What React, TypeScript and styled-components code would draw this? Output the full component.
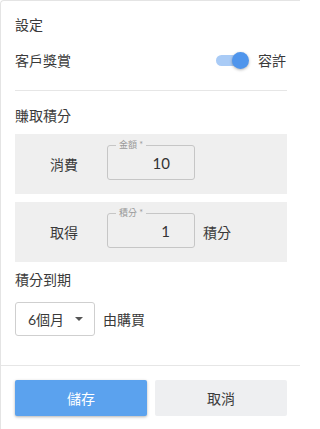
import React from "react";
import styled, { createGlobalStyle } from "styled-components";

const Global = createGlobalStyle`
  html, body { margin: 0; padding: 0; background: #fff; overflow: hidden; }
  body { font-family: Lato, "Noto Sans CJK TC", sans-serif; color: #3a3a3a; }
  * { box-sizing: border-box; }
`;

const Card = styled.div`
  width: 300px;
  min-height: 440px;
  border: 1px solid #e4e4e4;
  border-right: none;
  border-radius: 4px 0 0 4px;
  padding: 0 13px 0 14px;
  background: #fff;
`;

const Title = styled.div`
  padding-top: 14px;
  font-size: 14px;
  line-height: 20px;
`;

const Row = styled.div<{ $mt?: number }>`
  display: flex;
  align-items: center;
  margin-top: ${(p) => p.$mt ?? 0}px;
`;

const SettingRow = styled(Row)`
  height: 30px;
  justify-content: space-between;
  font-size: 14px;
  padding-right: 1px;
`;

const ToggleWrap = styled.div`
  display: flex;
  align-items: center;
  gap: 9px;
`;

const Track = styled.div`
  position: relative;
  width: 28px;
  height: 11px;
  border-radius: 6px;
  background: #a9cbf6;
  margin-right: 5px;
`;

const Thumb = styled.div`
  position: absolute;
  top: -3px;
  right: -5px;
  width: 17px;
  height: 17px;
  border-radius: 50%;
  background: #4f95ec;
  box-shadow: 0 1px 3px rgba(0, 0, 0, 0.3);
`;

const Divider = styled.div<{ $mt: number; $full?: boolean }>`
  height: 1px;
  background: #e6e6e6;
  margin-top: ${(p) => p.$mt}px;
  margin-left: ${(p) => (p.$full ? -14 : 0)}px;
  margin-right: ${(p) => (p.$full ? -13 : 0)}px;
`;

const Section = styled.div<{ $mt: number }>`
  margin-top: ${(p) => p.$mt}px;
  font-size: 14px;
  line-height: 20px;
`;

const GrayBox = styled.div<{ $mt: number }>`
  margin-top: ${(p) => p.$mt}px;
  height: 60px;
  background: #efefef;
  display: flex;
  align-items: center;
  padding-left: 35px;
  font-size: 14px;
`;

const BoxLabel = styled.span`
  width: 28px;
  margin-right: 29px;
  white-space: nowrap;
`;

const Outline = styled.div`
  position: relative;
  width: 88px;
  height: 35px;
  border: 1px solid #c6c6c6;
  border-radius: 3px;
  margin-bottom: 3px;
  display: flex;
  align-items: center;
  justify-content: flex-end;
  padding-right: 24px;
  font-size: 15px;
  color: #333;
`;

const Legend = styled.span`
  position: absolute;
  top: -7px;
  left: 8px;
  padding: 0 3px;
  background: #efefef;
  font-size: 9px;
  line-height: 12px;
  color: #9a9a9a;
`;

const Suffix = styled.span`
  margin-left: 8px;
`;

const Select = styled.div`
  width: 80px;
  height: 34px;
  border: 1px solid #cfcfcf;
  border-radius: 3px;
  display: flex;
  align-items: center;
  padding-left: 12px;
  font-size: 14px;
  gap: 11px;
`;

const Caret = styled.span`
  width: 0;
  height: 0;
  border-left: 4px solid transparent;
  border-right: 4px solid transparent;
  border-top: 4px solid #555;
`;

const After = styled.span`
  margin-left: 8px;
  font-size: 14px;
`;

const Buttons = styled.div`
  display: grid;
  grid-template-columns: 1fr 1fr;
  gap: 8px;
  margin-top: 14px;
`;

const Button = styled.button<{ $primary?: boolean }>`
  height: 36px;
  border: none;
  border-radius: 2px;
  font-family: inherit;
  font-size: 14px;
  background: ${(p) => (p.$primary ? "#5ba2ee" : "#eeeff1")};
  color: ${(p) => (p.$primary ? "#fff" : "#3a3a3a")};
  box-shadow: ${(p) => (p.$primary ? "0 1px 3px rgba(0,0,0,0.3)" : "none")};
`;

export default function App() {
  return (
    <>
      <Global />
      <Card>
        <Title>設定</Title>
        <SettingRow $mt={10}>
          <span>客戶獎賞</span>
          <ToggleWrap>
            <Track>
              <Thumb />
            </Track>
            <span>容許</span>
          </ToggleWrap>
        </SettingRow>
        <Divider $mt={15} />
        <Section $mt={15}>賺取積分</Section>
        <GrayBox $mt={8}>
          <BoxLabel>消費</BoxLabel>
          <Outline>
            <Legend>金額 *</Legend>
            10
          </Outline>
        </GrayBox>
        <GrayBox $mt={8}>
          <BoxLabel>取得</BoxLabel>
          <Outline>
            <Legend>積分 *</Legend>
            1
          </Outline>
          <Suffix>積分</Suffix>
        </GrayBox>
        <Section $mt={8}>積分到期</Section>
        <Row $mt={12}>
          <Select>
            <span>6個月</span>
            <Caret />
          </Select>
          <After>由購買</After>
        </Row>
        <Divider $mt={29} $full />
        <Buttons>
          <Button $primary>儲存</Button>
          <Button>取消</Button>
        </Buttons>
      </Card>
    </>
  );
}
